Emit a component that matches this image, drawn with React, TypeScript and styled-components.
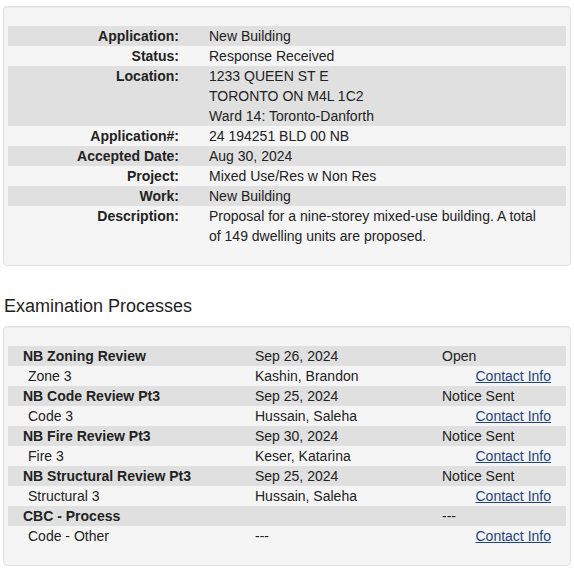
import React from "react";
import styled, { createGlobalStyle } from "styled-components";

type Detail = {
  label: string;
  lines: Array<string>;
};

type Process = {
  name: string;
  date: string;
  status: string;
  group: string;
  examiner: string;
};

const details: Array<Detail> = [
  { label: "Application:", lines: ["New Building"] },
  { label: "Status:", lines: ["Response Received"] },
  {
    label: "Location:",
    lines: ["1233 QUEEN ST E", "TORONTO ON M4L 1C2", "Ward 14: Toronto-Danforth"],
  },
  { label: "Application#:", lines: ["24 194251 BLD 00 NB"] },
  { label: "Accepted Date:", lines: ["Aug 30, 2024"] },
  { label: "Project:", lines: ["Mixed Use/Res w Non Res"] },
  { label: "Work:", lines: ["New Building"] },
  {
    label: "Description:",
    lines: [
      "Proposal for a nine-storey mixed-use building. A total of 149 dwelling units are proposed.",
    ],
  },
];

const processes: Array<Process> = [
  { name: "NB Zoning Review", date: "Sep 26, 2024", status: "Open", group: "Zone 3", examiner: "Kashin, Brandon" },
  { name: "NB Code Review Pt3", date: "Sep 25, 2024", status: "Notice Sent", group: "Code 3", examiner: "Hussain, Saleha" },
  { name: "NB Fire Review Pt3", date: "Sep 30, 2024", status: "Notice Sent", group: "Fire 3", examiner: "Keser, Katarina" },
  { name: "NB Structural Review Pt3", date: "Sep 25, 2024", status: "Notice Sent", group: "Structural 3", examiner: "Hussain, Saleha" },
  { name: "CBC - Process", date: "", status: "---", group: "Code - Other", examiner: "---" },
];

const App: React.FC = () => {
  return (
    <Page>
      <GlobalStyle />
      <Well>
        {details.map((d, i) => (
          <DetailRow key={d.label} shaded={i % 2 === 0}>
            <Label>{d.label}</Label>
            <Value>
              {d.lines.map((line) => (
                <div key={line}>{line}</div>
              ))}
            </Value>
          </DetailRow>
        ))}
      </Well>

      <Heading>Examination Processes</Heading>

      <Well>
        {processes.map((p) => (
          <React.Fragment key={p.name}>
            <ProcessRow shaded>
              <ProcessName>{p.name}</ProcessName>
              <Cell>{p.date}</Cell>
              <Cell>{p.status}</Cell>
            </ProcessRow>
            <ProcessRow>
              <Group>{p.group}</Group>
              <Cell>{p.examiner}</Cell>
              <LinkCell>
                <Link href="#">Contact Info</Link>
              </LinkCell>
            </ProcessRow>
          </React.Fragment>
        ))}
      </Well>
    </Page>
  );
};

const GlobalStyle = createGlobalStyle`
  body {
    margin: 0;
    background: #ffffff;
    color: #222222;
    font-family: "Liberation Sans", Arial, sans-serif;
    font-size: 14px;
    line-height: 20px;
  }
`;

const Page = styled.div`
  padding: 6px 3px;
`;

const Well = styled.div`
  padding: 19px 4px;
  background-color: #f5f5f5;
  border: 1px solid #e3e3e3;
  border-radius: 4px;
  box-shadow: inset 0 1px 1px rgba(0, 0, 0, 0.05);
`;

const DetailRow = styled.div<{ shaded?: boolean }>`
  display: grid;
  grid-template-columns: 171px 1fr;
  column-gap: 30px;
  background-color: ${(p) => (p.shaded ? "#e0e0e0" : "transparent")};
`;

const Label = styled.div`
  font-weight: bold;
  text-align: right;
`;

const Value = styled.div`
  padding-right: 20px;
`;

const Heading = styled.h3`
  margin: 30px 0 10px 1px;
  font-size: 18px;
  font-weight: normal;
  line-height: 20px;
`;

const ProcessRow = styled.div<{ shaded?: boolean }>`
  display: grid;
  grid-template-columns: 247px 187px 1fr;
  background-color: ${(p) => (p.shaded ? "#e0e0e0" : "transparent")};
`;

const Cell = styled.div``;

const ProcessName = styled.div`
  padding-left: 15px;
  font-weight: bold;
`;

const Group = styled.div`
  padding-left: 20px;
`;

const LinkCell = styled.div`
  text-align: right;
  padding-right: 15px;
`;

const Link = styled.a`
  color: #1f4483;
  text-decoration: underline;
`;

export default App;
